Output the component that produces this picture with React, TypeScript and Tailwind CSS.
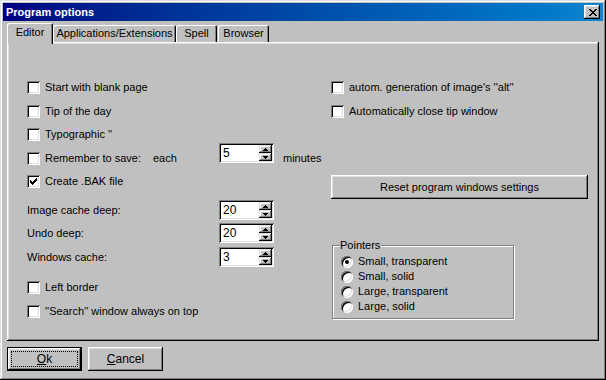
import clsx from "clsx"

const checkPath = "M6 0h1v1h-1z M5 1h2v1h-2z M0 2h1v1h-1z M4 2h3v1h-3z M0 3h2v1h-2z M3 3h3v1h-3z M0 4h5v1h-5z M1 5h3v1h-3z M2 6h1v1h-1z"
const closePath = "M0 0h2v1h-2z M6 0h2v1h-2z M1 1h2v1h-2z M5 1h2v1h-2z M2 2h4v1h-4z M3 3h2v1h-2z M2 4h4v1h-4z M1 5h2v1h-2z M5 5h2v1h-2z M0 6h2v1h-2z M6 6h2v1h-2z"

function Check({ checked }: { checked?: boolean }) {
    return (
        <span className="w-[13px] h-[13px] shrink-0 bg-white shadow-[inset_1px_1px_#808080,inset_-1px_-1px_#fff,inset_2px_2px_#000,inset_-2px_-2px_#dfdfdf] flex items-center justify-center">
            {checked && (
                <svg width="7" height="7" viewBox="0 0 7 7" shapeRendering="crispEdges">
                    <path d={checkPath} fill="#000" />
                </svg>
            )}
        </span>
    )
}

function CheckRow({ label, checked, className }: { label: string, checked?: boolean, className?: string }) {
    return (
        <div className={clsx("h-[20px] flex items-center gap-[5px]", className)}>
            <Check checked={checked} />
            <span>{label}</span>
        </div>
    )
}

function SpinButton({ up }: { up?: boolean }) {
    return (
        <div className="flex-1 bg-[#c0c0c0] shadow-[inset_-1px_-1px_#000,inset_1px_1px_#dfdfdf,inset_-2px_-2px_#808080,inset_2px_2px_#fff] flex items-center justify-center">
            <svg width="5" height="3" viewBox="0 0 5 3" shapeRendering="crispEdges">
                <path d={up ? "M2 0h1v1h-1z M1 1h3v1h-3z M0 2h5v1h-5z" : "M0 0h5v1h-5z M1 1h3v1h-3z M2 2h1v1h-1z"} fill="#000" />
            </svg>
        </div>
    )
}

function Spin({ value, className }: { value: string, className?: string }) {
    return (
        <div className={clsx("w-[55px] h-[20px] shrink-0 bg-white shadow-[inset_1px_1px_#808080,inset_-1px_-1px_#fff,inset_2px_2px_#000,inset_-2px_-2px_#dfdfdf] flex items-center pl-[4px] pr-[2px]", className)}>
            <span className="flex-1 text-[12px] leading-none">{value}</span>
            <div className="flex flex-col w-[13px] h-[16px]">
                <SpinButton up />
                <SpinButton />
            </div>
        </div>
    )
}

function Radio({ label, on }: { label: string, on?: boolean }) {
    return (
        <div className="h-[15px] flex items-center gap-[5px]">
            <span className="w-[12px] h-[12px] rounded-full bg-white shadow-[inset_1px_1px_#808080,inset_-1px_-1px_#fff,inset_2px_2px_#000,inset_-2px_-2px_#dfdfdf] flex items-center justify-center">
                {on && <span className="w-[4px] h-[4px] rounded-full bg-black" />}
            </span>
            <span>{label}</span>
        </div>
    )
}

function Tab({ label, active, className }: { label: string, active?: boolean, className?: string }) {
    return (
        <div className={clsx(
            "flex items-center justify-center rounded-t-[2px] bg-[#c0c0c0] shadow-[inset_1px_1px_#fff,inset_-1px_0_#000,inset_-2px_0_#808080]",
            active ? "h-[21px] -mb-[2px] relative z-10 pb-[3px]" : "h-[17px] pb-[1px]",
            className
        )}>
            {label}
        </div>
    )
}

export default function App() {
    return (
        <div className="w-[606px] h-[380px] bg-[#c0c0c0] p-[3px] flex flex-col text-[11px] leading-[13px] text-black font-['Liberation_Sans',Arial,sans-serif] shadow-[inset_-1px_-1px_#000,inset_1px_1px_#dfdfdf,inset_-2px_-2px_#808080,inset_2px_2px_#fff]">
            {/* title bar */}
            <div className="h-[18px] shrink-0 bg-linear-to-r from-[#000080] to-[#1084d0] flex items-center justify-between pl-[3px] pr-[3px]">
                <span className="text-white font-bold text-[11px]">Program options</span>
                <button className="w-[16px] h-[14px] bg-[#c0c0c0] shadow-[inset_-1px_-1px_#000,inset_1px_1px_#fff,inset_-2px_-2px_#808080,inset_2px_2px_#dfdfdf] flex items-center justify-center pl-[1px]">
                    <svg width="8" height="7" viewBox="0 0 8 7" shapeRendering="crispEdges">
                        <path d={closePath} fill="#000" />
                    </svg>
                </button>
            </div>

            <div className="flex-1 flex flex-col px-[4px]">
                {/* tabs */}
                <div className="h-[19px] mt-[2px] flex items-end">
                    <Tab label="Editor" active className="w-[46px]" />
                    <Tab label="Applications/Extensions" className="w-[123px]" />
                    <Tab label="Spell" className="w-[41px]" />
                    <Tab label="Browser" className="w-[51px] ml-[1px]" />
                </div>

                {/* panel */}
                <div className="h-[299px] shrink-0 shadow-[inset_-1px_-1px_#000,inset_1px_1px_#fff,inset_-2px_-2px_#808080,inset_2px_2px_#dfdfdf] flex pl-[20px] pt-[35px]">
                    <div className="w-[304px] flex flex-col">
                        <CheckRow label="Start with blank page" />
                        <CheckRow label="Tip of the day" className="mt-[4px]" />
                        <CheckRow label="Typographic ''" className="mt-[3px]" />
                        <div className="h-[20px] mt-[4px] flex items-center">
                            <Check />
                            <span className="w-[108px] ml-[5px]">Remember to save:</span>
                            <span className="w-[66px]">each</span>
                            <Spin value="5" className="mb-[10px]" />
                            <span className="ml-[9px]">minutes</span>
                        </div>
                        <CheckRow label="Create .BAK file" checked className="mt-[3px]" />
                        <div className="h-[20px] mt-[9px] flex items-center">
                            <span className="w-[192px]">Image cache deep:</span>
                            <Spin value="20" />
                        </div>
                        <div className="h-[20px] mt-[3px] flex items-center">
                            <span className="w-[192px]">Undo deep:</span>
                            <Spin value="20" />
                        </div>
                        <div className="h-[20px] mt-[4px] flex items-center">
                            <span className="w-[192px]">Windows cache:</span>
                            <Spin value="3" />
                        </div>
                        <CheckRow label="Left border" className="mt-[10px]" />
                        <CheckRow label={"''Search'' window always on top"} className="mt-[4px]" />
                    </div>

                    <div className="w-[257px] flex flex-col">
                        <CheckRow label={"autom. generation of image's ''alt''"} />
                        <CheckRow label="Automatically close tip window" className="mt-[4px]" />
                        <button className="h-[24px] mt-[54px] w-[257px] bg-[#c0c0c0] shadow-[inset_-1px_-1px_#000,inset_1px_1px_#fff,inset_-2px_-2px_#808080,inset_2px_2px_#dfdfdf] flex items-center justify-center">
                            Reset program windows settings
                        </button>
                        <div className="relative mt-[46px] ml-[1px] w-[182px] h-[74px] border border-[#808080] shadow-[1px_1px_#fff,inset_1px_1px_#fff] pt-[8px] pl-[8px]">
                            <span className="absolute -top-[7px] left-[7px] bg-[#c0c0c0] pr-[1px]">Pointers</span>
                            <Radio label="Small, transparent" on />
                            <Radio label="Small, solid" />
                            <Radio label="Large, transparent" />
                            <Radio label="Large, solid" />
                        </div>
                    </div>
                </div>

                {/* buttons */}
                <div className="mt-[6px] flex gap-[6px]">
                    <button className="w-[75px] h-[24px] border border-black bg-[#c0c0c0] shadow-[inset_-1px_-1px_#000,inset_1px_1px_#fff,inset_-2px_-2px_#808080,inset_2px_2px_#dfdfdf] p-[3px]">
                        <span className="w-full h-full border border-dotted border-black flex items-center justify-center text-[12px]">
                            <span><span className="underline">O</span>k</span>
                        </span>
                    </button>
                    <button className="w-[75px] h-[24px] bg-[#c0c0c0] shadow-[inset_-1px_-1px_#000,inset_1px_1px_#fff,inset_-2px_-2px_#808080,inset_2px_2px_#dfdfdf] flex items-center justify-center text-[12px]">
                        <span><span className="underline">C</span>ancel</span>
                    </button>
                </div>
            </div>
        </div>
    )
}
